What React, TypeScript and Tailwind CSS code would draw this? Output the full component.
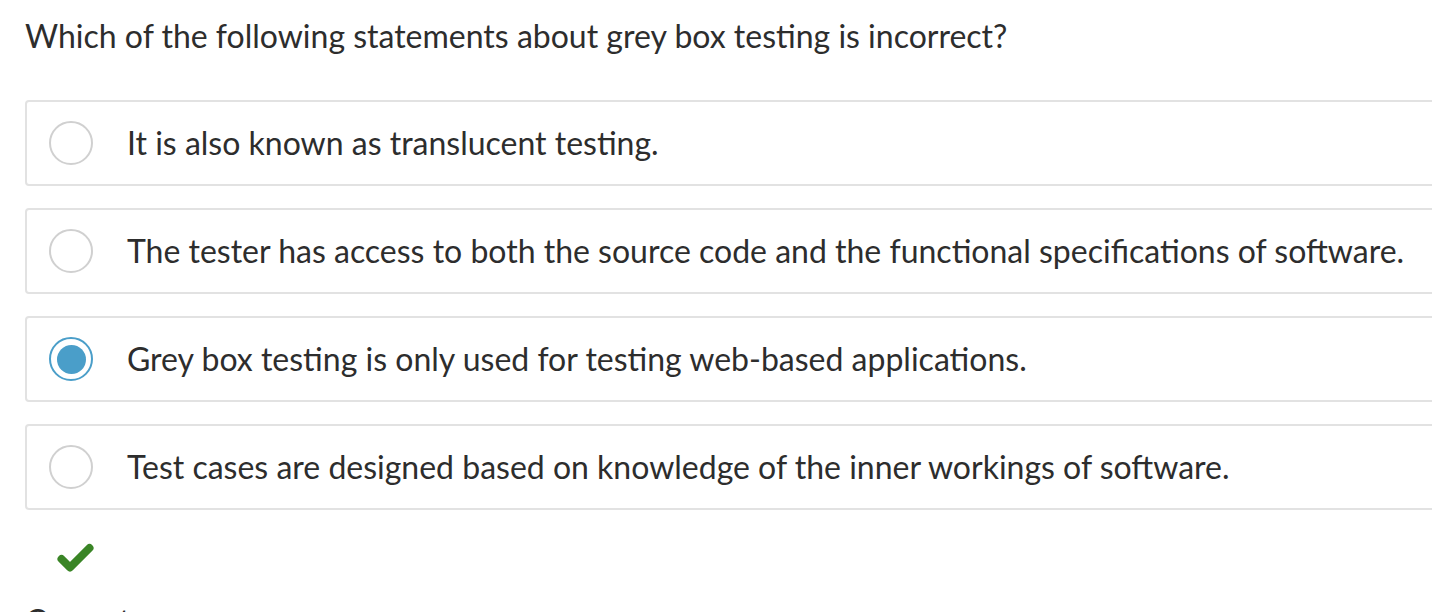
const options = [
  "It is also known as translucent testing.",
  "The tester has access to both the source code and the functional specifications of software.",
  "Grey box testing is only used for testing web-based applications.",
  "Test cases are designed based on knowledge of the inner workings of software.",
];

const selected = 2;

function Radio({ checked }: { checked: boolean }) {
  if (checked) {
    return (
      <span className="flex h-[44px] w-[44px] shrink-0 items-center justify-center rounded-full border-2 border-[#4a9ec9] bg-white">
        <span className="h-[29px] w-[29px] rounded-full bg-[#4a9ec9]" />
      </span>
    );
  }
  return <span className="h-[44px] w-[44px] shrink-0 rounded-full border-2 border-[#d0d0d0] bg-white" />;
}

export default function App() {
  return (
    <div className="h-[612px] w-[1432px] overflow-hidden bg-white font-['Lato',sans-serif] text-[#2d2d2d]">
      <div className="pl-[25px] pt-[16px]">
        <h1 className="text-[32px] leading-[40px]">Which of the following statements about grey box testing is incorrect?</h1>

        <div className="mt-[44px] flex flex-col gap-[22px]">
          {options.map((text, i) => (
            <label
              key={i}
              className="flex h-[86px] w-[1430px] items-center gap-[34px] rounded-[4px] border-2 border-[#e2e2e2] pl-[22px]"
            >
              <Radio checked={i === selected} />
              <span className="text-[32px] leading-none">{text}</span>
            </label>
          ))}
        </div>

        <div className="mt-[33px] pl-[32px]">
          <svg width="37" height="30" viewBox="0 0 37 30">
            <path
              d="M4.5 16 L13 24.5 L32.5 5"
              fill="none"
              stroke="#3a8526"
              strokeWidth="8"
              strokeLinecap="round"
              strokeLinejoin="round"
            />
          </svg>
        </div>

        <p className="mt-[28px] text-[32px] leading-[40px]">Correct</p>
      </div>
    </div>
  );
}
